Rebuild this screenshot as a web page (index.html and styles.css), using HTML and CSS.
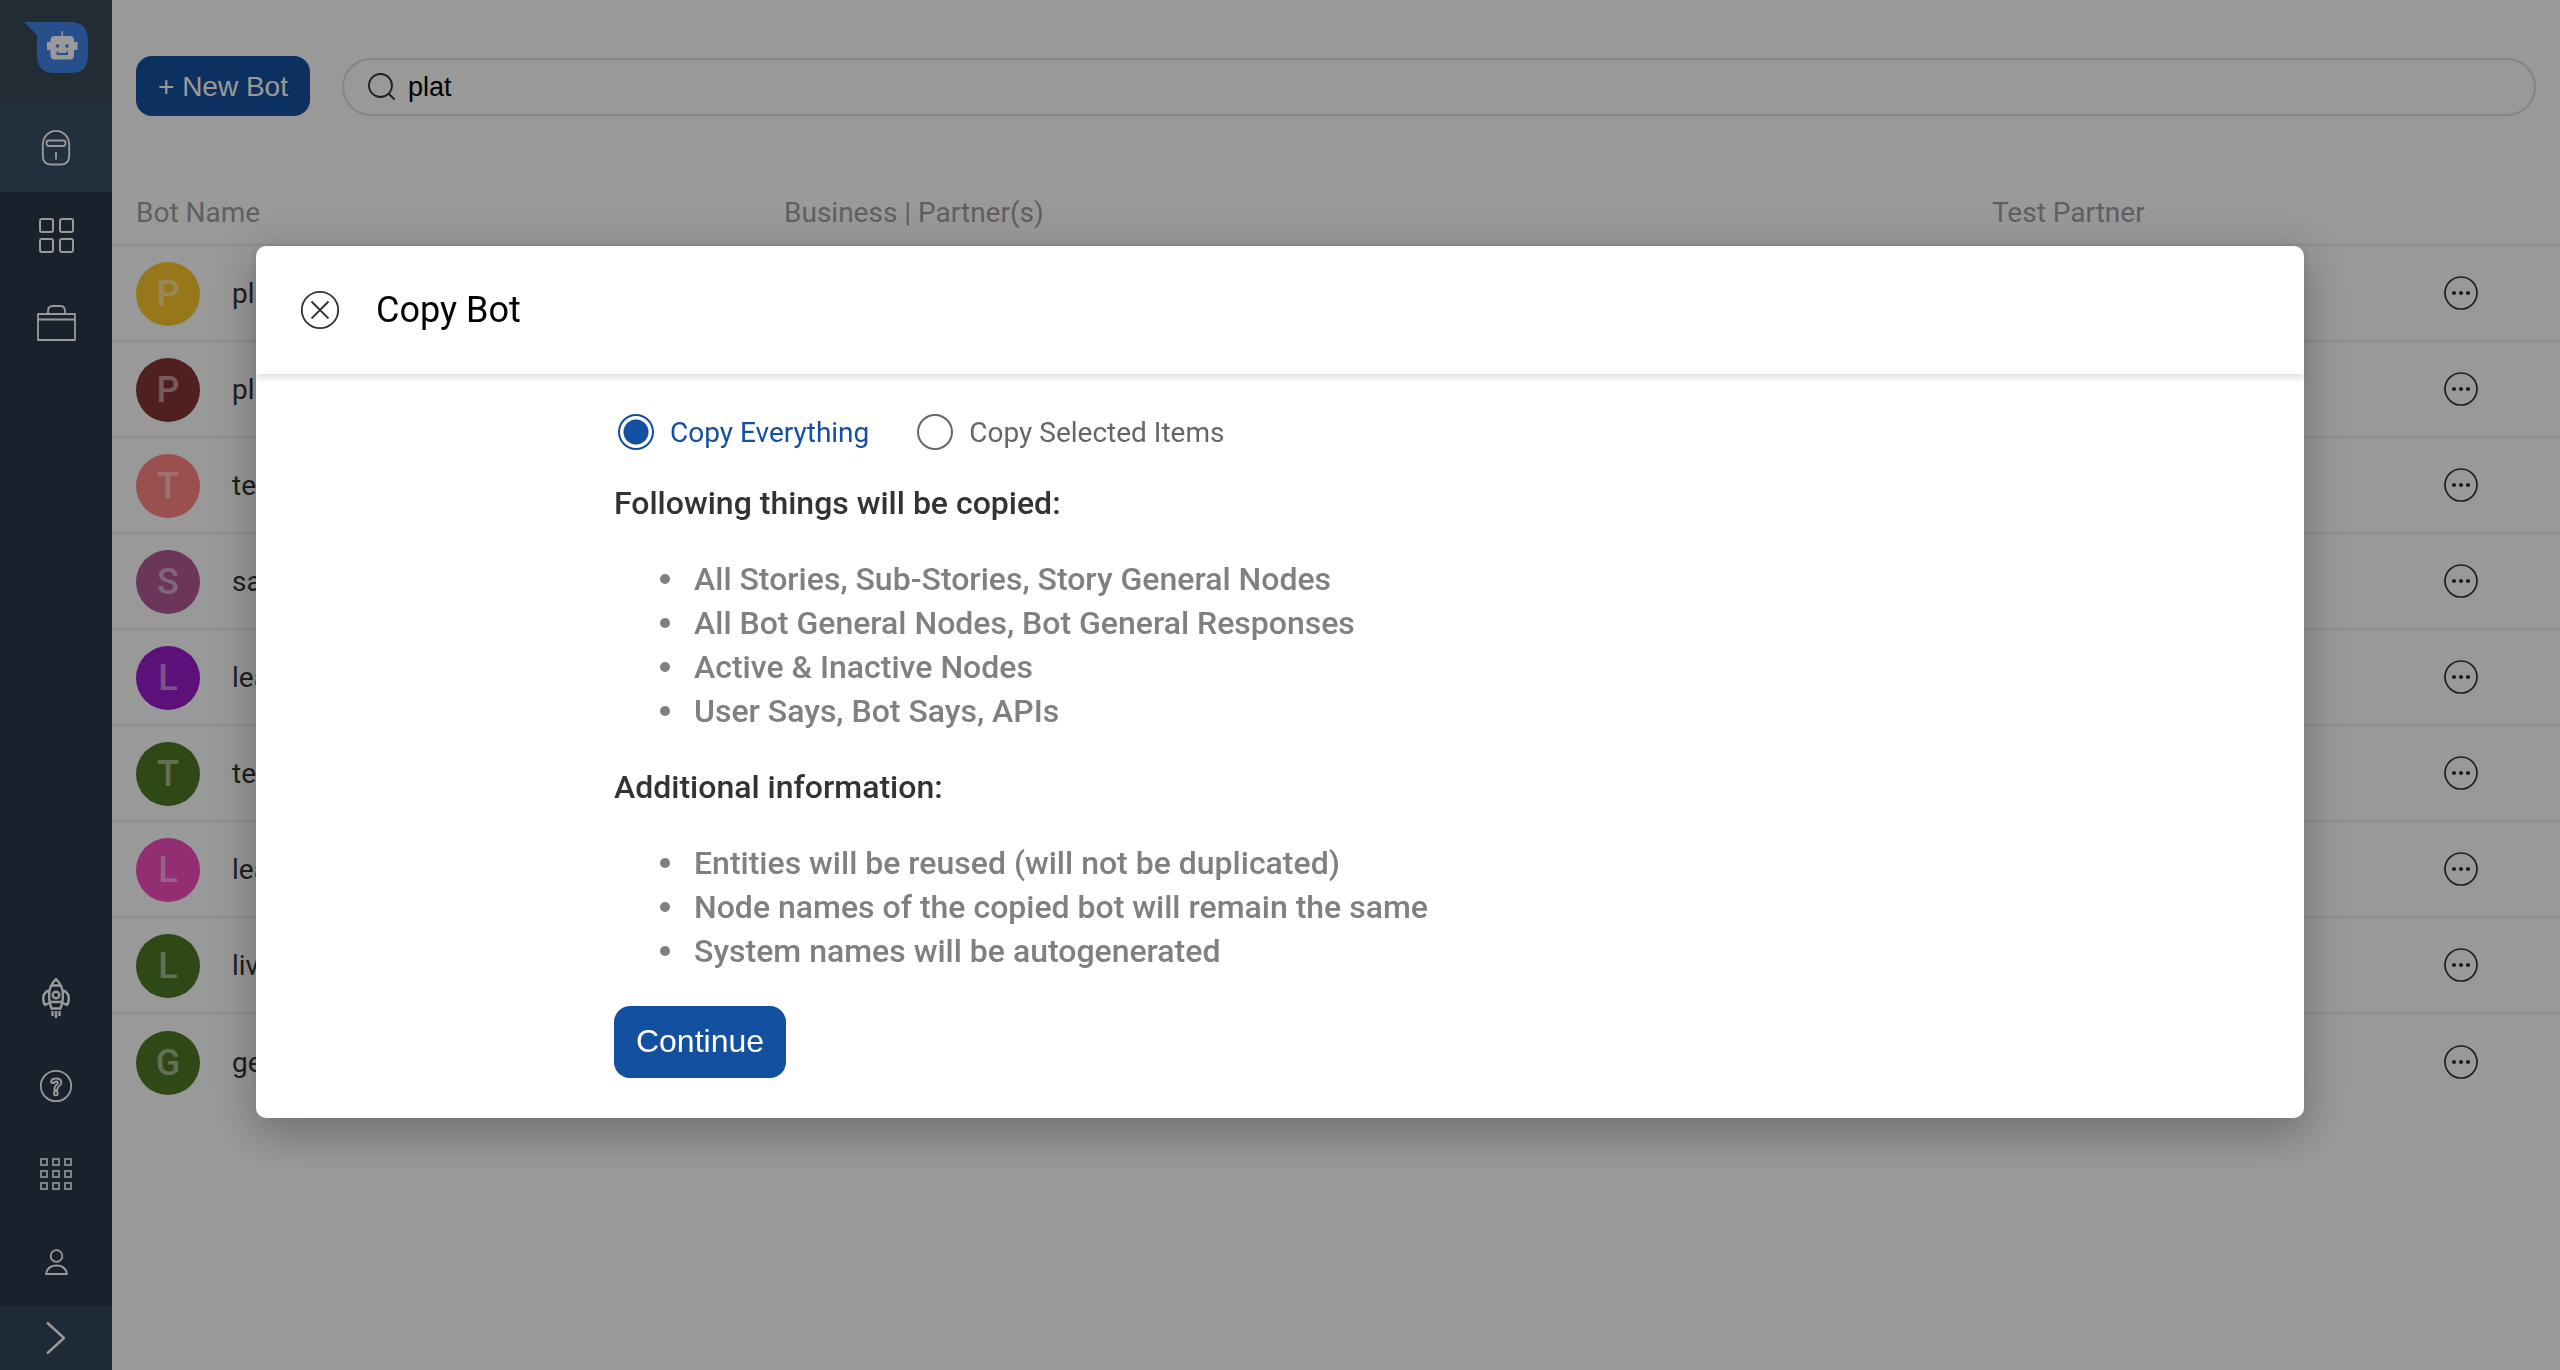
FILE: index.html
```html
<!DOCTYPE html>
<html lang="en">
<head>
<meta charset="utf-8">
<title>Bots</title>
<link rel="stylesheet" href="styles.css">
</head>
<body>
<svg class="sprite" aria-hidden="true">
  <symbol id="more" viewBox="0 0 36 36">
    <circle cx="18" cy="18" r="16" fill="none" stroke="currentColor" stroke-width="1.7"/>
    <circle cx="11" cy="18" r="2.100" fill="currentColor"/><circle cx="18" cy="18" r="2.100" fill="currentColor"/><circle cx="25" cy="18" r="2.100" fill="currentColor"/>
  </symbol>
</svg>
<div class="app">
  <nav class="sidebar" aria-label="Main">
    <a class="logo" href="#" aria-label="Home">
      <svg width="64" height="52" viewBox="0 0 64 52">
        <path fill="#4084ea" d="M0 0H46Q64 0 64 18V34Q64 51 46 51H31Q13 51 13 34V13Z"/>
        <path fill="#fff" d="M37.500 9h1.400v5H46q4 0 4 4v2h3.500v8H50v5q0 4.500-4 4.500H30.500q-4 0-4-4.500v-5H23v-8h3.500v-2q0-4 4-4h7z"/>
        <circle cx="33.500" cy="24" r="1.800" fill="#4084ea"/><circle cx="43" cy="24" r="1.800" fill="#4084ea"/>
        <path d="M33.500 29.500v2.500h9.500v-2.500" fill="none" stroke="#4084ea" stroke-width="1.800"/>
      </svg>
    </a>
    <a class="nav-item active" href="#" aria-label="Bots">
      <svg width="40" height="40" viewBox="0 0 40 40" class="line">
        <path d="M6.800 17a13.200 14.200 0 0 1 26.400 0v10q0 9.500-8 9.500H14.800q-8 0-8-9.500z"/>
        <rect x="10.500" y="12.500" width="19" height="5.500" rx="2.500"/>
        <path d="M20 24v7.500"/>
      </svg>
    </a>
    <a class="nav-item" href="#" aria-label="Dashboard">
      <svg width="40" height="40" viewBox="0 0 40 40" class="line thick">
        <rect x="4" y="3" width="13" height="13" rx="2"/><rect x="24" y="3" width="13" height="13" rx="2"/>
        <rect x="4" y="23" width="13" height="13" rx="2"/><rect x="24" y="23" width="13" height="13" rx="2"/>
      </svg>
    </a>
    <a class="nav-item" href="#" aria-label="Business">
      <svg width="40" height="40" viewBox="0 0 40 40" class="line">
        <rect x="2" y="10" width="37" height="26"/><path d="M2 15.500h37M12 9.500v-2.500q0-5 5-5h7q5 0 5 5V9.500"/>
      </svg>
    </a>
    <div class="spacer"></div>
    <a class="nav-item" href="#" aria-label="Releases">
      <svg width="40" height="44" viewBox="0 0 40 44" class="line rocket">
        <path d="M20 3.200q6 6 6.700 12.800.8 9-2.200 16.500h-9Q12.500 25 13.300 16 14 9.200 20 3.200z"/>
        <path d="M16 9.500h8M14 26h12M13 14.500q-5.500 2-5.700 7-.3 5 1.700 7.500l5-2.500M27 14.500q5.500 2 5.700 7 .3 5-1.700 7.500l-5-2.500"/>
        <circle cx="20" cy="19" r="3.300"/><path d="M16.500 35v5M20 35v7M23.500 35v5"/>
      </svg>
    </a>
    <a class="nav-item" href="#" aria-label="Help">
      <svg width="40" height="40" viewBox="0 0 40 40" class="line">
        <circle cx="20" cy="20" r="15.200"/>
        <path d="M15 16.500q0-4 5-4 5.300 0 5.300 4.200 0 2.300-2.600 3.800-1.400 1-1.400 3.500h-3q0-3.800 2.200-5.300 1.500-1 1.500-2 0-1.200-1.800-1.200-2 0-2.100 1.600z"/>
        <circle cx="19.800" cy="27.300" r="2"/>
      </svg>
    </a>
    <a class="nav-item" href="#" aria-label="Apps">
      <svg width="40" height="40" viewBox="0 0 40 40" class="line apps">
        <path d="M5 5h6v6H5zM17 5h6v6h-6zM29 5h6v6h-6zM5 17h6v6H5zM17 17h6v6h-6zM29 17h6v6h-6zM5 29h6v6H5zM17 29h6v6h-6zM29 29h6v6h-6z"/>
      </svg>
    </a>
    <a class="nav-item" href="#" aria-label="Profile">
      <svg width="40" height="40" viewBox="0 0 40 40" class="line">
        <circle cx="20.500" cy="14" r="5.800"/><path d="M10 32q1.500-8.500 10.500-8.500T31 32z"/>
      </svg>
    </a>
    <button class="expand" type="button" aria-label="Expand menu">
      <svg width="40" height="40" viewBox="0 0 40 40" class="line chevron"><path d="M11 4.500 28 20 11 35.500"/></svg>
    </button>
  </nav>
  <main class="main">
    <div class="toolbar">
      <button class="btn new-bot" type="button">+ New Bot</button>
      <label class="search">
        <svg width="28" height="28" viewBox="0 0 28 28"><circle cx="12.500" cy="12.500" r="11.500"/><path d="m20.500 20.500 6 6"/></svg>
        <input type="text" value="plat" aria-label="Search bots">
      </label>
    </div>
    <table class="bots">
      <colgroup><col class="col-name"><col class="col-business"><col class="col-partner"><col class="col-menu"></colgroup>
      <thead><tr><th>Bot Name</th><th>Business | Partner(s)</th><th>Test Partner</th><th></th></tr></thead>
      <tbody>
        <tr><td><div class="bot"><span class="avatar yellow">P</span>pl</div></td><td></td><td></td><td><button class="more" type="button" aria-label="More"><svg><use href="#more"/></svg></button></td></tr>
        <tr><td><div class="bot"><span class="avatar maroon">P</span>pl</div></td><td></td><td></td><td><button class="more" type="button" aria-label="More"><svg><use href="#more"/></svg></button></td></tr>
        <tr><td><div class="bot"><span class="avatar salmon">T</span>test</div></td><td></td><td></td><td><button class="more" type="button" aria-label="More"><svg><use href="#more"/></svg></button></td></tr>
        <tr><td><div class="bot"><span class="avatar mauve">S</span>sales</div></td><td></td><td></td><td><button class="more" type="button" aria-label="More"><svg><use href="#more"/></svg></button></td></tr>
        <tr><td><div class="bot"><span class="avatar purple">L</span>leads</div></td><td></td><td></td><td><button class="more" type="button" aria-label="More"><svg><use href="#more"/></svg></button></td></tr>
        <tr><td><div class="bot"><span class="avatar green">T</span>test</div></td><td></td><td></td><td><button class="more" type="button" aria-label="More"><svg><use href="#more"/></svg></button></td></tr>
        <tr><td><div class="bot"><span class="avatar pink">L</span>leads</div></td><td></td><td></td><td><button class="more" type="button" aria-label="More"><svg><use href="#more"/></svg></button></td></tr>
        <tr><td><div class="bot"><span class="avatar green">L</span>live</div></td><td></td><td></td><td><button class="more" type="button" aria-label="More"><svg><use href="#more"/></svg></button></td></tr>
        <tr><td><div class="bot"><span class="avatar green">G</span>general</div></td><td></td><td></td><td><button class="more" type="button" aria-label="More"><svg><use href="#more"/></svg></button></td></tr>
      </tbody>
    </table>
  </main>
</div>
<div class="overlay">
  <section class="dialog" role="dialog" aria-modal="true" aria-labelledby="dialog-title">
    <header class="dialog-head">
      <button class="close" type="button" aria-label="Close">
        <svg width="40" height="40" viewBox="0 0 40 40"><circle cx="20" cy="20" r="18.200"/><path d="m11.500 11.500 17 17m0-17-17 17"/></svg>
      </button>
      <h1 id="dialog-title">Copy Bot</h1>
    </header>
    <form class="dialog-body">
      <div class="options">
        <label><input type="radio" name="scope" checked><span>Copy Everything</span></label>
        <label><input type="radio" name="scope"><span>Copy Selected Items</span></label>
      </div>
      <h2>Following things will be copied:</h2>
      <ul>
        <li>All Stories, Sub-Stories, Story General Nodes</li>
        <li>All Bot General Nodes, Bot General Responses</li>
        <li>Active &amp; Inactive Nodes</li>
        <li>User Says, Bot Says, APIs</li>
      </ul>
      <h2>Additional information:</h2>
      <ul>
        <li>Entities will be reused (will not be duplicated)</li>
        <li>Node names of the copied bot will remain the same</li>
        <li>System names will be autogenerated</li>
      </ul>
      <button class="btn continue" type="button">Continue</button>
    </form>
  </section>
</div>
</body>
</html>
```
FILE: styles.css
```css
* { box-sizing: border-box; }

body {
  margin: 0;
  font: 400 28px/32px Roboto, sans-serif;
  color: #333;
  background: #fff;
}

button { border: 0; padding: 0; background: none; color: inherit; cursor: pointer; }
svg { display: block; }
.sprite { display: none; }

.app { display: flex; min-height: 100vh; }

/* Sidebar */
.sidebar {
  flex: none;
  width: 112px;
  display: flex;
  flex-direction: column;
  background: #2b3a4a;
  color: #fff;
}
.logo { height: 104px; padding: 22px 0 0 24px; background: #3a4a58; }
.nav-item { height: 88px; display: grid; place-items: center; color: #fff; }
.nav-item.active { background: #3a5167; }
.spacer { flex: 1; }
.expand { height: 64px; display: grid; place-items: center; background: #32485a; }
.line { fill: none; stroke: currentColor; stroke-width: 1.8; stroke-linejoin: round; }
.thick { stroke-width: 2; }
.rocket { stroke-width: 2.4; }
.apps { stroke-width: 2; stroke-linejoin: miter; opacity: .8; }
.chevron { stroke-width: 2.4; }

/* Bot list */
.main { flex: 1; min-width: 0; }
.toolbar { display: flex; align-items: flex-end; gap: 32px; padding: 56px 24px 0; }
.btn {
  font-family: "Liberation Sans", Arial, sans-serif;
  color: #fff;
  background: #1450a0;
  border-radius: 16px;
}
.new-bot { width: 174px; height: 60px; padding-top: 2px; font-size: 28px; }
.search {
  flex: 1;
  height: 58px;
  display: flex;
  align-items: center;
  gap: 12px;
  padding: 0 24px;
  border: 2px solid #dedede;
  border-radius: 29px;
}
.search svg { fill: none; stroke: #333; stroke-width: 1.8; }
.search input {
  flex: 1;
  border: 0;
  padding: 0;
  outline: 0;
  background: none;
  color: #000;
  font: 400 27px/32px "Liberation Sans", Arial, sans-serif;
}

.bots { width: 100%; margin-top: 64px; border-collapse: separate; border-spacing: 0; table-layout: fixed; }
.col-name { width: 648px; }
.col-partner { width: 451px; }
.col-menu { width: 141px; }
.bots th {
  height: 66px;
  padding: 2px 24px 0;
  border-bottom: 2px solid #ededed;
  text-align: left;
  font-weight: 400;
  color: #9f9f9f;
}
.bots td { height: 96px; padding: 0 24px; border-bottom: 2px solid #ededed; }
.bots tr:last-child td { border-bottom: 0; }
.bot { display: flex; align-items: center; gap: 32px; padding-top: 2px; }
.avatar {
  width: 64px;
  height: 64px;
  border-radius: 50%;
  text-align: center;
  font-size: 36px;
  line-height: 64px;
  font-weight: 500;
  color: rgba(255, 255, 255, .5);
}
.yellow { background: #fac62a; }
.maroon { background: #853435; }
.salmon { background: #ff8582; }
.mauve { background: #b25a94; }
.purple { background: #991bcb; }
.green { background: #4d7826; }
.pink { background: #f54ebe; }
.more { display: block; width: 36px; height: 36px; }
.more svg { width: 36px; height: 36px; }

/* Copy dialog */
.overlay {
  position: fixed;
  inset: 0;
  padding-top: 246px;
  background: rgba(0, 0, 0, .4);
}
.dialog {
  width: 80%;
  margin: 0 auto;
  border-radius: 10px;
  background: #fff;
  box-shadow: 0 20px 40px rgba(0, 0, 0, .14), 0 8px 48px 8px rgba(0, 0, 0, .14);
}
.dialog-head {
  display: flex;
  align-items: center;
  gap: 36px;
  height: 128px;
  padding: 0 44px;
  box-shadow: 0 4px 6px rgba(0, 0, 0, .12);
}
.close svg { fill: none; stroke: #333; stroke-width: 1.8; }
.dialog-head h1 { margin: 0; font-size: 36px; line-height: 44px; font-weight: 400; color: #000; }
.dialog-body { padding: 36px 358px 40px; }
.options { display: flex; gap: 48px; padding-left: 4px; }
.options label { display: flex; align-items: center; gap: 16px; height: 44px; color: #666; }
.options span { padding-top: 2px; }
.options input {
  appearance: none;
  width: 36px;
  height: 36px;
  margin: 0;
  border: 2px solid #666;
  border-radius: 50%;
}
.options input:checked {
  border-color: #1450a0;
  background: radial-gradient(circle, #1450a0 12px, transparent 13px);
}
.options input:checked + span { color: #1450a0; }
.dialog-body h2 { margin: 0; padding-top: 27px; font-size: 32px; line-height: 44px; font-weight: 500; }
.dialog-body ul {
  margin: 32px 0 5px;
  padding-left: 46px;
  list-style: none;
  font-size: 32px;
  line-height: 44px;
  font-weight: 500;
  color: #808080;
}
.dialog-body li { display: flex; align-items: center; gap: 24px; }
.dialog-body li::before {
  content: "";
  width: 10px;
  height: 10px;
  border-radius: 50%;
  background: currentColor;
}
.continue { display: block; width: 172px; height: 72px; margin-top: 33px; padding-bottom: 2px; font-size: 32px; }
```
